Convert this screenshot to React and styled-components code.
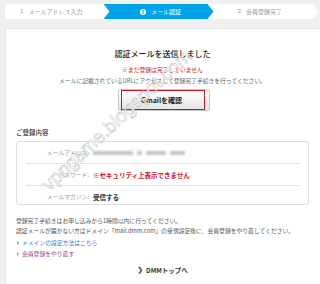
import { createGlobalStyle, styled } from "styled-components";

const GlobalStyle = createGlobalStyle`
  html, body {
    margin: 0;
    padding: 0;
  }
  body {
    font-family: "Noto Sans CJK JP", "Noto Sans", sans-serif;
    color: #333;
  }
`;

const steps = [
  { num: "1", label: "メールアドレス入力" },
  { num: "2", label: "メール認証", active: true },
  { num: "3", label: "会員登録完了" },
];

const rows = [
  { label: "メールアドレス:", kind: "blur" },
  { label: "パスワード:", value: "※セキュリティ上表示できません", kind: "alert" },
  { label: "メールマガジン:", value: "受信する", kind: "plain" },
];

const App = () => {
  return (
    <Page>
      <GlobalStyle />
      <Stepper>
        {steps.map((s) => (
          <Step key={s.num} $active={s.active}>
            {s.active ? <StepBadge>{s.num}</StepBadge> : <StepNum>{s.num}</StepNum>}
            {s.label}
          </Step>
        ))}
      </Stepper>

      <Card>
        <Title>認証メールを送信しました</Title>
        <Warning>※まだ登録は完了していません</Warning>
        <Lead>メールに記載されているURLにアクセスして登録完了手続きを行ってください。</Lead>
        <ButtonRow>
          <GmailButton>Gmailを確認</GmailButton>
        </ButtonRow>

        <SectionTitle>ご登録内容</SectionTitle>
        <InfoBox>
          {rows.map((r) => (
            <InfoRow key={r.label}>
              <InfoLabel>{r.label}</InfoLabel>
              {r.kind === "blur" ? (
                <BlurValue>
                  <BlurBit $w={40} />
                  <BlurBit $w={5} />
                  <BlurBit $w={20} />
                  <BlurBit $w={15} />
                </BlurValue>
              ) : (
                <InfoValue $alert={r.kind === "alert"}>{r.value}</InfoValue>
              )}
            </InfoRow>
          ))}
        </InfoBox>

        <Notes>
          <p>登録完了手続きはお申し込みから1時間以内に行ってください。</p>
          <p>認証メールが届かない方はドメイン「mail.dmm.com」の受信設定後に、会員登録をやり直してください。</p>
        </Notes>
        <LinkList>
          <LinkItem>ドメインの設定方法はこちら</LinkItem>
          <LinkItem $visited>会員登録をやり直す</LinkItem>
        </LinkList>

        <TopLink>
          <Chevron>❯</Chevron>DMMトップへ
        </TopLink>
      </Card>

      <Watermark>vpngame.blogspot.com</Watermark>
    </Page>
  );
};
export default App;

const Page = styled.div`
  position: relative;
  width: 320px;
  height: 284px;
  overflow: hidden;
  background: #f0f0f0;
  padding: 4px 0 0 5px;
  box-sizing: border-box;
`;

const Stepper = styled.div`
  display: flex;
  width: 313px;
  height: 15px;
  background: #fff;
  clip-path: polygon(0 0, calc(100% - 4px) 0, 100% 50%, calc(100% - 4px) 100%, 0 100%);
`;

const Step = styled.div`
  display: flex;
  align-items: center;
  justify-content: center;
  gap: 5px;
  font-size: 6px;
  line-height: 15px;
  white-space: nowrap;
  color: ${({ $active }) => ($active ? "#fff" : "#999")};
  background: ${({ $active }) => ($active ? "#00a3e8" : "transparent")};
  width: ${({ $active }) => ($active ? "110px" : "auto")};
  flex: ${({ $active }) => ($active ? "none" : "1")};
  margin-left: ${({ $active }) => ($active ? "-2px" : "0")};
  padding-left: ${({ $active }) => ($active ? "4px" : "0")};
  box-sizing: border-box;
  clip-path: ${({ $active }) =>
    $active
      ? "polygon(0 0, calc(100% - 6px) 0, 100% 50%, calc(100% - 6px) 100%, 0 100%, 6px 50%)"
      : "none"};

  &:first-child {
    padding-right: 8px;
  }
  &:last-child {
    padding-right: 12px;
  }
`;

const StepNum = styled.span`
  font-family: "Liberation Sans", sans-serif;
  font-size: 6px;
`;

const StepBadge = styled.span`
  display: inline-grid;
  place-items: center;
  width: 6px;
  height: 6px;
  border-radius: 50%;
  background: #fff;
  color: #00a3e8;
  font-family: "Liberation Sans", sans-serif;
  font-size: 5px;
  line-height: 6px;
  font-weight: bold;
`;

const Card = styled.div`
  margin: 10px -20px 0 1px;
  height: 260px;
  background: #fff;
  box-shadow: 0 0 2px rgba(0, 0, 0, 0.12);
  padding: 20px 31px 0 10px;
  box-sizing: border-box;
`;

const Title = styled.h1`
  margin: 0;
  text-align: center;
  font-size: 8px;
  line-height: 10px;
  font-weight: 500;
  color: #222;
`;

const Warning = styled.p`
  margin: 6px 0 0;
  text-align: center;
  font-size: 5.8px;
  line-height: 9px;
  color: #d0112b;
`;

const Lead = styled.p`
  margin: 2px 0 0;
  text-align: center;
  font-size: 5.8px;
  line-height: 9px;
  color: #666;
`;

const ButtonRow = styled.div`
  display: flex;
  justify-content: center;
  margin-top: 4px;
`;

const GmailButton = styled.button`
  position: relative;
  width: 92px;
  height: 22px;
  margin-left: 2px;
  border: 1px solid #c8c8c8;
  border-radius: 2px;
  background: linear-gradient(#ffffff, #e4e4e4);
  font-family: "Noto Sans CJK JP", "Liberation Sans", sans-serif;
  font-size: 7px;
  font-weight: bold;
  color: #222;
  padding: 0 4px 0 0;

  &::after {
    content: "";
    position: absolute;
    left: 2px;
    top: 0;
    width: 84px;
    height: 20px;
    border: 1.5px solid #c4161c;
    box-sizing: border-box;
  }
`;

const SectionTitle = styled.h2`
  margin: 17px 0 0;
  font-size: 6.5px;
  line-height: 9px;
  font-weight: 500;
  color: #333;
`;

const InfoBox = styled.div`
  margin-top: 4px;
  height: 64px;
  border: 1px solid #ddd;
  border-radius: 3px;
  padding: 0 9px 0 10px;
  box-sizing: border-box;
`;

const InfoRow = styled.div`
  display: grid;
  grid-template-columns: 62px 1fr;
  gap: 4px;
  align-items: center;
  height: 21px;

  & + & {
    border-top: 1px dotted #ccc;
  }
`;

const InfoLabel = styled.span`
  text-align: right;
  font-size: 5.8px;
  color: #999;
`;

const InfoValue = styled.span`
  font-size: 6.5px;
  font-weight: bold;
  color: ${({ $alert }) => ($alert ? "#d0112b" : "#333")};
`;

const BlurValue = styled.span`
  display: flex;
  gap: 4px;
  align-items: center;
`;

const BlurBit = styled.span`
  display: block;
  width: ${({ $w }) => $w}px;
  height: 4px;
  background: #c4c4c4;
  filter: blur(0.8px);
`;

const Notes = styled.div`
  margin-top: 11px;
  font-size: 5.8px;
  line-height: 10px;
  color: #555;

  p {
    margin: 0;
    white-space: nowrap;
  }
`;

const LinkList = styled.ul`
  list-style: none;
  margin: 1px 0 0;
  padding: 0;
`;

const LinkItem = styled.li`
  position: relative;
  padding-left: 6px;
  font-size: 5.8px;
  line-height: 11px;
  color: ${({ $visited }) => ($visited ? "#a0489a" : "#4a78c2")};

  &::before {
    content: "";
    position: absolute;
    left: 1px;
    top: 4px;
    border-left: 2.5px solid #999;
    border-top: 2px solid transparent;
    border-bottom: 2px solid transparent;
  }
`;

const TopLink = styled.div`
  display: flex;
  justify-content: center;
  align-items: center;
  gap: 3px;
  margin-top: 6px;
  font-size: 6.5px;
  font-weight: bold;
  color: #333;
`;

const Chevron = styled.span`
  font-family: "DejaVu Sans", sans-serif;
  font-size: 7px;
  font-weight: bold;
`;

const Watermark = styled.div`
  position: absolute;
  left: 117px;
  top: 120px;
  transform: translate(-50%, -50%) rotate(-43deg);
  font-family: "Liberation Sans", sans-serif;
  font-size: 19px;
  white-space: nowrap;
  color: rgba(255, 255, 255, 0.75);
  -webkit-text-stroke: 0.4px #a8a8a8;
  pointer-events: none;
`;
